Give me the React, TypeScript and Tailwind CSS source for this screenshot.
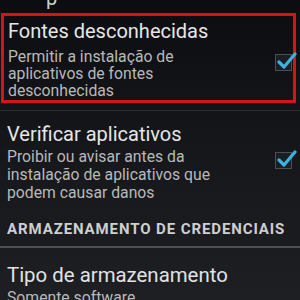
import React from "react";

function Check() {
  return (
    <div className="w-[17px] h-[17px] border border-[#4b4f55] bg-[#1b1e22] relative shrink-0">
      <svg className="absolute -top-[4px] -left-[1px]" width="22" height="20" viewBox="0 0 22 20">
        <path d="M4 11 L9 16 L20 3" fill="none" stroke="#3ab3e0" strokeWidth="3.2" strokeLinecap="round" strokeLinejoin="round" />
      </svg>
    </div>
  );
}

export default function App() {
  return (
    <div
      className="w-[300px] h-[300px] overflow-hidden bg-gradient-to-b from-[#0c0d10] via-[#15171b] to-[#1d1f23] text-[#dcdcdc]"
      style={{ fontFamily: "Roboto, 'Noto Sans', sans-serif" }}
    >
      <div className="h-[13px] overflow-hidden relative">
        <div className="absolute -top-[17px] left-[46px] text-[20px] text-[#cfcfcf]">p</div>
      </div>
      <div className="mx-[1px] w-[295px] h-[90px] border-[3px] border-[#d3141b] flex items-start pl-[4px] pt-[3px]">
        <div className="flex-1">
          <div className="text-[20px] leading-[24px] text-[#e6e6e6]">Fontes desconhecidas</div>
          <div className="text-[15.75px] leading-[17px] text-[#b9b9b9] mt-[5px]">
            <div>Permitir a instalação de</div>
            <div>aplicativos de fontes</div>
            <div>desconhecidas</div>
          </div>
        </div>
        <div className="mt-[35px] mr-[1px]">
          <Check />
        </div>
      </div>
      <div className="h-[7px]" />
      <div className="h-[1px] bg-[#2a2d32]" />
      <div className="flex items-start pl-[7px] pt-[11px]">
        <div className="flex-1">
          <div className="text-[20px] leading-[24px] text-[#e6e6e6]">Verificar aplicativos</div>
          <div className="text-[15.75px] leading-[18px] text-[#b9b9b9] mt-[2px]">
            <div>Proibir ou avisar antes da</div>
            <div>instalação de aplicativos que</div>
            <div>podem causar danos</div>
          </div>
        </div>
        <div className="mt-[30px] mr-[8px]">
          <Check />
        </div>
      </div>
      <div className="pl-[7px] pt-[18px] text-[15px] leading-[18px] font-bold tracking-[0.9px] text-[#cfcfcf]">
        ARMAZENAMENTO DE CREDENCIAIS
      </div>
      <div className="h-[2px] bg-[#4c4f54] mt-[8px]" />
      <div className="pl-[7px] pt-[15px]">
        <div className="text-[20.4px] leading-[24px] text-[#e2e2e2]">Tipo de armazenamento</div>
        <div className="text-[15.75px] leading-[17px] text-[#b9b9b9] mt-[2px]">Somente software</div>
      </div>
    </div>
  );
}
